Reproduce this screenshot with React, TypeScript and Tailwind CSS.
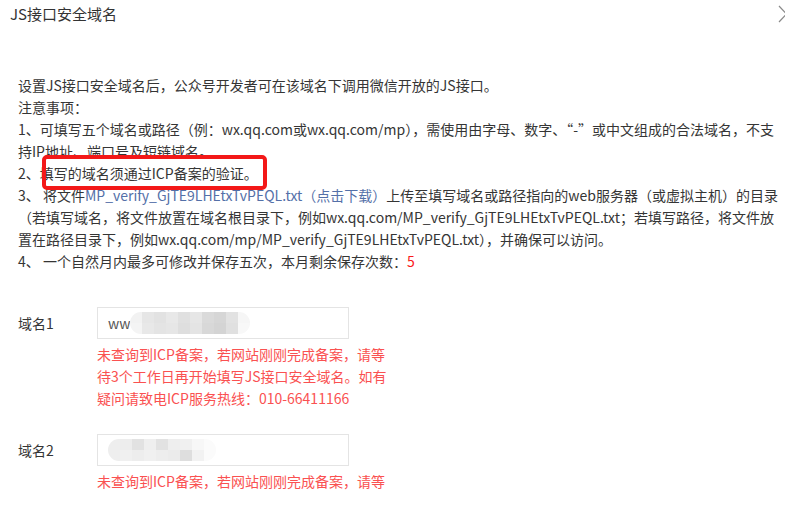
const notes = [
  "设置JS接口安全域名后，公众号开发者可在该域名下调用微信开放的JS接口。",
  "注意事项：",
  "1、可填写五个域名或路径（例：wx.qq.com或wx.qq.com/mp），需使用由字母、数字、“-”或中文组成的合法域名，不支",
  "持IP地址、端口号及短链域名。",
  "2、填写的域名须通过ICP备案的验证。",
];

const mosaic1 = [
  ["bg-[#f2f2f2]", "bg-[#e6e6e6]", "bg-[#e2e2e2]", "bg-[#e8e8e8]", "bg-[#e0e0e0]", "bg-[#e6e6e6]", "bg-[#dadada]", "bg-[#d6d6d6]", "bg-[#e2e2e2]", "bg-[#f6f6f6]"],
  ["bg-[#f4f4f4]", "bg-[#e8e8e8]", "bg-[#e4e4e4]", "bg-[#e6e6e6]", "bg-[#dedede]", "bg-[#e4e4e4]", "bg-[#d8d8d8]", "bg-[#d4d4d4]", "bg-[#e0e0e0]", "bg-[#f8f8f8]"],
];

const mosaic2 = [
  ["bg-[#eeeeee]", "bg-[#ededed]", "bg-[#e2e2e2]", "bg-[#efefef]", "bg-[#e2e2e2]", "bg-[#eeeeee]", "bg-[#f0f0f0]", "bg-[#f7f7f7]", "bg-[#fbfbfb]"],
  ["bg-[#eeeeee]", "bg-[#f0f0f0]", "bg-[#ededed]", "bg-[#f0f0f0]", "bg-[#ededed]", "bg-[#ebebeb]", "bg-[#dedede]", "bg-[#f2f2f2]", "bg-[#fbfbfb]"],
];

function Mosaic({ rows }: { rows: string[][] }) {
  return (
    <div className="flex flex-col overflow-hidden rounded-full blur-[0.6px]">
      {rows.map((row, i) => (
        <div key={i} className="flex">
          {row.map((c, j) => (
            <div key={j} className={`h-[11px] w-[12px] ${c}`} />
          ))}
        </div>
      ))}
    </div>
  );
}

function DomainRow({ label, prefix, rows, lines }: { label: string; prefix?: string; rows: string[][]; lines: string[] }) {
  return (
    <div className="flex">
      <div className="w-[79px] pt-[5px] leading-[22px]">{label}</div>
      <div>
        <div className="flex h-[32px] w-[252px] items-center border border-[#e4e4e4] bg-white pl-[10px]">
          {prefix && <span className="text-[#555]">{prefix}</span>}
          <Mosaic rows={rows} />
        </div>
        <div className="mt-[4px] leading-[22px] text-[#fa5151]">
          {lines.map((l) => (
            <div key={l} className="whitespace-nowrap">{l}</div>
          ))}
        </div>
      </div>
    </div>
  );
}

export default function App() {
  return (
    <div className="relative h-[520px] w-[785px] overflow-hidden bg-white text-[14px] text-[#353535] [font-family:'Microsoft_YaHei','Noto_Sans_CJK_SC',sans-serif]">
      <div className="flex items-center justify-between pl-[10px] pt-[3px]">
        <h1 className="text-[15px] leading-[22px] text-[#333]">JS接口安全域名</h1>
        <svg width="12" height="20" viewBox="0 0 12 20" className="mr-[-4px]">
          <polyline points="2,2 9.5,10 2,18" fill="none" stroke="#8a8a8a" strokeWidth="1.2" />
        </svg>
      </div>

      <div className="mt-[49px] pl-[18px] leading-[22px]">
        {notes.map((n) => (
          <div key={n} className="whitespace-nowrap">{n}</div>
        ))}
        <div className="whitespace-nowrap">
          3、 将文件<span className="text-[#5470a8]">MP_verify_GjTE9LHEtxTvPEQL.txt（点击下载）</span>上传至填写域名或路径指向的web服务器（或虚拟主机）的目录
        </div>
        <div className="whitespace-nowrap">
          （若填写域名，将文件放置在域名根目录下，例如wx.qq.com/MP_verify_GjTE9LHEtxTvPEQL.txt；若填写路径，将文件放
        </div>
        <div className="whitespace-nowrap">
          置在路径目录下，例如wx.qq.com/mp/MP_verify_GjTE9LHEtxTvPEQL.txt），并确保可以访问。
        </div>
        <div className="whitespace-nowrap">
          4、 一个自然月内最多可修改并保存五次，本月剩余保存次数：<span className="text-[#fa1a1a]">5</span>
        </div>
      </div>

      <div className="mt-[35px] flex flex-col gap-[25px] pl-[18px]">
        <DomainRow
          label="域名1"
          prefix="ww"
          rows={mosaic1}
          lines={[
            "未查询到ICP备案，若网站刚刚完成备案，请等",
            "待3个工作日再开始填写JS接口安全域名。如有",
            "疑问请致电ICP服务热线：010-66411166",
          ]}
        />
        <DomainRow
          label="域名2"
          rows={mosaic2}
          lines={["未查询到ICP备案，若网站刚刚完成备案，请等"]}
        />
      </div>

      <div className="absolute left-[42px] top-[155px] h-[35px] w-[225px] rounded-[5px] border-[4px] border-[#f31818]" />
    </div>
  );
}
